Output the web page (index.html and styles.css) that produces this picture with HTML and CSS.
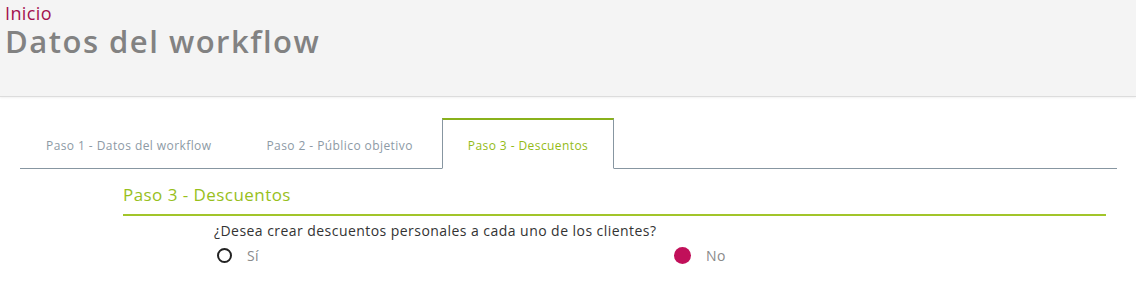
FILE: index.html
```html
<!DOCTYPE html>
<html lang="es">
<head>
<meta charset="utf-8">
<title>Datos del workflow</title>
<link rel="stylesheet" href="styles.css">
</head>
<body>
<header class="page-header">
  <a class="breadcrumb" href="#">Inicio</a>
  <h1 class="page-title">Datos del workflow</h1>
</header>
<nav class="tabs">
  <a class="tab" href="#">Paso 1 - Datos del workflow</a>
  <a class="tab" href="#">Paso 2 - Público objetivo</a>
  <a class="tab tab-active" href="#">Paso 3 - Descuentos</a>
</nav>
<section class="step">
  <h2 class="step-title">Paso 3 - Descuentos</h2>
  <div class="question">
    <p class="question-text">¿Desea crear descuentos personales a cada uno de los clientes?</p>
    <div class="options">
      <label class="option"><span class="radio"></span><span class="option-label">Sí</span></label>
      <label class="option"><span class="radio radio-checked"></span><span class="option-label">No</span></label>
    </div>
  </div>
</section>
</body>
</html>
```
FILE: styles.css
```css
* { box-sizing: border-box; }
body {
  margin: 0;
  font-family: "Open Sans", Lato, sans-serif;
  background: #ffffff;
  color: #333;
}
.page-header {
  background: #f4f4f4;
  height: 97px;
  padding: 3px 5px 0;
  border-bottom: 1px solid #dcdcdc;
  box-shadow: 0 1px 2px rgba(0,0,0,0.06);
}
.breadcrumb {
  display: block;
  color: #a3114f;
  font-size: 18px;
  line-height: 20px;
  letter-spacing: 0.4px;
  text-decoration: none;
}
.page-title {
  margin: 0;
  font-size: 31px;
  line-height: 36px;
  font-weight: 600;
  color: #828282;
  letter-spacing: 1.5px;
}
.tabs {
  display: flex;
  margin: 21px 19px 0 20px;
  border-bottom: 1px solid #8796a1;
  height: 51px;
}
.tab {
  display: flex;
  align-items: center;
  padding: 4px 26px 0;
  margin-right: 3px;
  height: 50px;
  font-size: 12px;
  letter-spacing: 0.42px;
  color: #8d9aa5;
  text-decoration: none;
}
.tab-active {
  color: #94bb17;
  background: #fff;
  border: 1px solid #8796a1;
  border-top: 2px solid #89b11b;
  border-bottom: 1px solid #fff;
  height: 51px;
  padding: 2px 25px 0;
}
.step {
  margin: 14px 30px 0 123px;
}
.step-title {
  margin: 0;
  font-size: 17px;
  line-height: 24px;
  font-weight: 400;
  letter-spacing: 0.45px;
  color: #98c01c;
  padding-bottom: 7px;
  border-bottom: 2px solid #a2c52a;
}
.question {
  padding-left: 91px;
}
.question-text {
  margin: 5px 0 0;
  font-size: 14px;
  line-height: 19px;
  letter-spacing: 0.45px;
  color: #333;
}
.options {
  display: grid;
  grid-template-columns: 459px 1fr;
  margin-top: 3px;
}
.option {
  display: flex;
  align-items: center;
  height: 24px;
}
.radio {
  width: 15px;
  height: 15px;
  margin-left: 3px;
  border: 2px solid #222;
  border-radius: 50%;
}
.radio-checked {
  width: 17px;
  height: 17px;
  margin-left: 1px;
  border: none;
  background: #c1105a;
}
.option-label {
  margin-left: 15px;
  font-size: 14px;
  letter-spacing: 0.4px;
  color: #8a8a8a;
}
```
